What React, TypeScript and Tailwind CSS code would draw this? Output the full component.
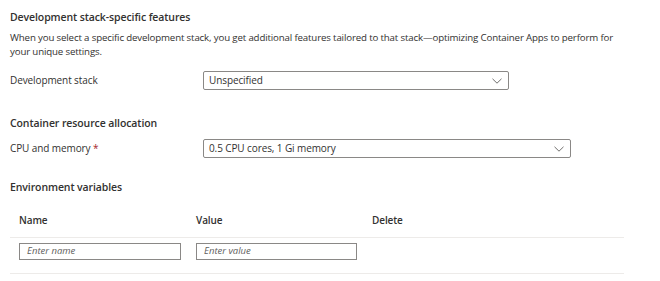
import React from 'react';

const Chevron = () => (
  <svg width="10" height="6" viewBox="0 0 10 6" fill="none" className="shrink-0">
    <path d="M0.5 0.8 L5 5.2 L9.5 0.8" stroke="#605e5c" strokeWidth="0.9" />
  </svg>
);

const Dropdown = ({ value, width }: { value: string; width: string }) => (
  <div
    className={`flex h-[19px] items-center justify-between rounded-[2px] border border-[#8a8886] bg-white pl-[5px] pr-[6px] ${width}`}
  >
    <span className="text-[10px] tracking-[-0.1px] text-[#323130]">{value}</span>
    <Chevron />
  </div>
);

const App = () => {
  return (
    <div className="h-[281px] w-[660px] bg-white pl-[10px] pt-[9px] text-[#323130] font-['Segoe_UI','Open_Sans',sans-serif]">
      {/* Development stack */}
      <h2 className="h-[16px] text-[10.5px] font-semibold leading-[16px] tracking-[-0.1px]">
        Development stack-specific features
      </h2>
      <p className="mt-[6px] w-[624px] text-[9.7px] leading-[14px] tracking-[-0.15px]">
        When you select a specific development stack, you get additional features tailored to that stack—optimizing
        Container Apps to perform for your unique settings.
      </p>
      <div className="mt-[12px] flex items-center">
        <div className="w-[193px] text-[10px] tracking-[-0.1px]">Development stack</div>
        <Dropdown value="Unspecified" width="w-[306px]" />
      </div>

      {/* Resource allocation */}
      <h2 className="mt-[25px] h-[16px] text-[10.5px] font-semibold leading-[16px] tracking-[-0.1px]">
        Container resource allocation
      </h2>
      <div className="mt-[8px] flex items-center">
        <div className="w-[193px] text-[10px] tracking-[-0.1px]">
          CPU and memory <span className="text-[#a4262c]">*</span>
        </div>
        <Dropdown value="0.5 CPU cores, 1 Gi memory" width="w-[368px]" />
      </div>

      {/* Env vars */}
      <h2 className="mt-[21px] h-[16px] text-[10.5px] font-semibold leading-[16px] tracking-[-0.1px]">
        Environment variables
      </h2>
      <div className="mt-[8px] w-[614px]">
        <div className="grid h-[35px] grid-cols-[162px_161px_1fr] items-center gap-x-[15px] border-b border-[#edebe9] pl-[9px] text-[10px] font-semibold tracking-[-0.1px]">
          <div>Name</div>
          <div>Value</div>
          <div>Delete</div>
        </div>
        <div className="grid h-[36px] grid-cols-[162px_161px_1fr] items-start gap-x-[15px] border-b border-[#edebe9] pl-[9px] pt-[5px]">
          <div className="flex h-[17px] items-center border border-[#8a8886] pl-[7px] text-[9.5px] italic text-[#605e5c]">
            Enter name
          </div>
          <div className="flex h-[17px] items-center border border-[#8a8886] pl-[7px] text-[9.5px] italic text-[#605e5c]">
            Enter value
          </div>
          <div />
        </div>
      </div>
    </div>
  );
};

export default App;
